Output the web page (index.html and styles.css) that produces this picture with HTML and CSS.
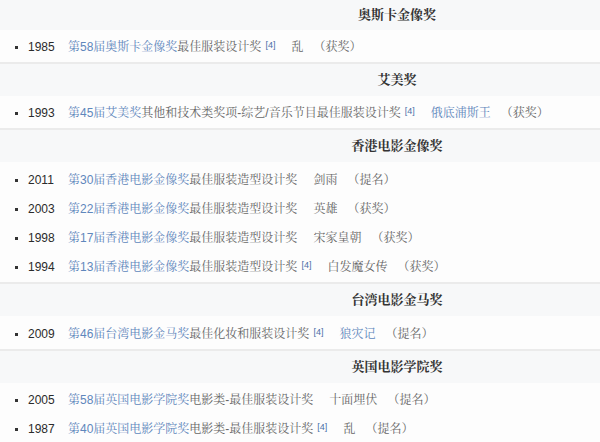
FILE: index.html
```html
<!DOCTYPE html>
<html lang="zh">
<head>
<meta charset="utf-8">
<link rel="stylesheet" href="styles.css">
</head>
<body>
<div class="awards">
  <div class="head first">奥斯卡金像奖</div>
  <ul class="rows">
    <li><span class="dot"></span><span class="year">1985</span><a class="award">第58届奥斯卡金像奖</a>最佳服装设计奖<sup class="ref">[4]</sup><span class="work">乱</span><span class="status">（获奖）</span></li>
  </ul>

  <div class="head">艾美奖</div>
  <ul class="rows">
    <li><span class="dot"></span><span class="year">1993</span><a class="award">第45届艾美奖</a>其他和技术类奖项-综艺/音乐节目最佳服装设计奖<sup class="ref">[4]</sup><a class="work link">俄底浦斯王</a><span class="status">（获奖）</span></li>
  </ul>

  <div class="head">香港电影金像奖</div>
  <ul class="rows roomy">
    <li><span class="dot"></span><span class="year">2011</span><a class="award">第30届香港电影金像奖</a>最佳服装造型设计奖<span class="work">剑雨</span><span class="status">（提名）</span></li>
    <li><span class="dot"></span><span class="year">2003</span><a class="award">第22届香港电影金像奖</a>最佳服装造型设计奖<span class="work">英雄</span><span class="status">（获奖）</span></li>
    <li><span class="dot"></span><span class="year">1998</span><a class="award">第17届香港电影金像奖</a>最佳服装造型设计奖<span class="work">宋家皇朝</span><span class="status">（获奖）</span></li>
    <li><span class="dot"></span><span class="year">1994</span><a class="award">第13届香港电影金像奖</a>最佳服装造型设计奖<sup class="ref">[4]</sup><span class="work">白发魔女传</span><span class="status">（获奖）</span></li>
  </ul>

  <div class="head">台湾电影金马奖</div>
  <ul class="rows roomy">
    <li><span class="dot"></span><span class="year">2009</span><a class="award">第46届台湾电影金马奖</a>最佳化妆和服装设计奖<sup class="ref">[4]</sup><a class="work link">狼灾记</a><span class="status">（提名）</span></li>
  </ul>

  <div class="head">英国电影学院奖</div>
  <ul class="rows last">
    <li><span class="dot"></span><span class="year">2005</span><a class="award">第58届英国电影学院奖</a>电影类-最佳服装设计奖<span class="work">十面埋伏</span><span class="status">（提名）</span></li>
    <li><span class="dot"></span><span class="year">1987</span><a class="award">第40届英国电影学院奖</a>电影类-最佳服装设计奖<sup class="ref">[4]</sup><span class="work">乱</span><span class="status">（提名）</span></li>
  </ul>
</div>
</body>
</html>
```

FILE: styles.css
```css
html, body {
  margin: 0;
  padding: 0;
  background: #fdfdfd;
}

body {
  font-family: "Liberation Sans", "Noto Serif CJK SC", "Noto Sans CJK SC", sans-serif;
  font-size: 12px;
  color: #666;
}

.awards {
  display: flex;
  flex-direction: column;
}

.head {
  height: 32px;
  line-height: 32px;
  background: #f7f8f9;
  padding-left: 194px;
  text-align: center;
  font-size: 13px;
  font-weight: bold;
  color: #333;
}

.head.first {
  height: 30px;
  line-height: 29px;
}

.rows {
  list-style: none;
  margin: 0;
  padding: 3px 0 0;
  border-bottom: 2px solid #ebebeb;
  background: #fdfdfd;
}

.rows.roomy {
  padding-top: 4px;
}

.rows.last {
  border-bottom: none;
}

.rows li {
  height: 29px;
  line-height: 29px;
  white-space: nowrap;
  display: flex;
  align-items: center;
}

.dot {
  width: 3px;
  height: 3px;
  background: #333;
  margin-left: 15px;
  margin-right: 10px;
  flex: none;
}

.year {
  color: #2b2b2b;
  width: 40px;
  flex: none;
}

.award,
.link {
  color: #5f87bc;
  text-decoration: none;
}

.ref {
  color: #4a6fa8;
  font-size: 9px;
  line-height: 1;
  align-self: flex-start;
  margin-top: 8px;
  margin-left: 4px;
}

.work {
  margin-left: 16px;
}

.status {
  margin-left: 10px;
  color: #666;
}
```
